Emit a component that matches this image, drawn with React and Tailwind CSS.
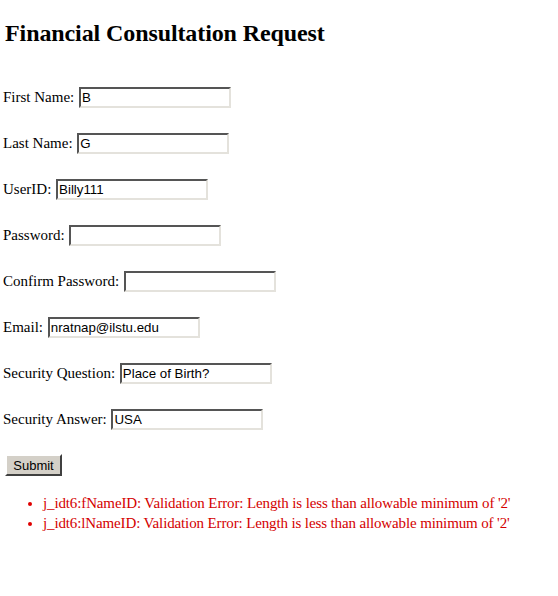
const fields = [
  { label: 'First Name:', value: 'B' },
  { label: 'Last Name:', value: 'G' },
  { label: 'UserID:', value: 'Billy111' },
  { label: 'Password:', value: '', type: 'password' },
  { label: 'Confirm Password:', value: '', type: 'password' },
  { label: 'Email:', value: 'nratnap@ilstu.edu' },
  { label: 'Security Question:', value: 'Place of Birth?' },
  { label: 'Security Answer:', value: 'USA' },
]

const errors = [
  "j_idt6:fNameID: Validation Error: Length is less than allowable minimum of '2'",
  "j_idt6:lNameID: Validation Error: Length is less than allowable minimum of '2'",
]

export default function App() {
  return (
    <div className="min-h-[596px] bg-white text-black font-['Liberation_Serif','Times_New_Roman',serif] text-[15px] pl-[3px]">
      <h1 className="pt-[19px] pl-[2px] text-[24px] font-bold leading-[28px] tracking-[-0.1px]">
        Financial Consultation Request
      </h1>

      <form className="flex flex-col pt-[27px]" onSubmit={(e) => e.preventDefault()}>
        {fields.map((f) => (
          <div key={f.label} className="flex items-center h-[46px]">
            <label className="leading-[20px] whitespace-pre">{f.label} </label>
            <input
              type={f.type || 'text'}
              defaultValue={f.value}
              className="ml-[1px] w-[152px] h-[21px] px-[1px] bg-white font-['Liberation_Sans',Arial,sans-serif] text-[13.3px] border-2 border-t-[#555555] border-l-[#555555] border-b-[#e4e2dc] border-r-[#e4e2dc] outline-none"
            />
          </div>
        ))}

        <div className="flex items-center h-[46px]">
          <button
            type="submit"
            className="ml-[2px] h-[22px] w-[57px] bg-[#d4d0c8] font-['Liberation_Sans',Arial,sans-serif] text-[13px] text-black border-2 border-t-white border-l-white border-b-[#404040] border-r-[#404040]"
          >
            Submit
          </button>
        </div>
      </form>

      <ul className="mt-[5px] pl-[40px] list-disc marker:text-[#e00000] text-[#d40000] leading-[20px] tracking-[-0.13px]">
        {errors.map((e) => (
          <li key={e}>{e}</li>
        ))}
      </ul>
    </div>
  )
}
